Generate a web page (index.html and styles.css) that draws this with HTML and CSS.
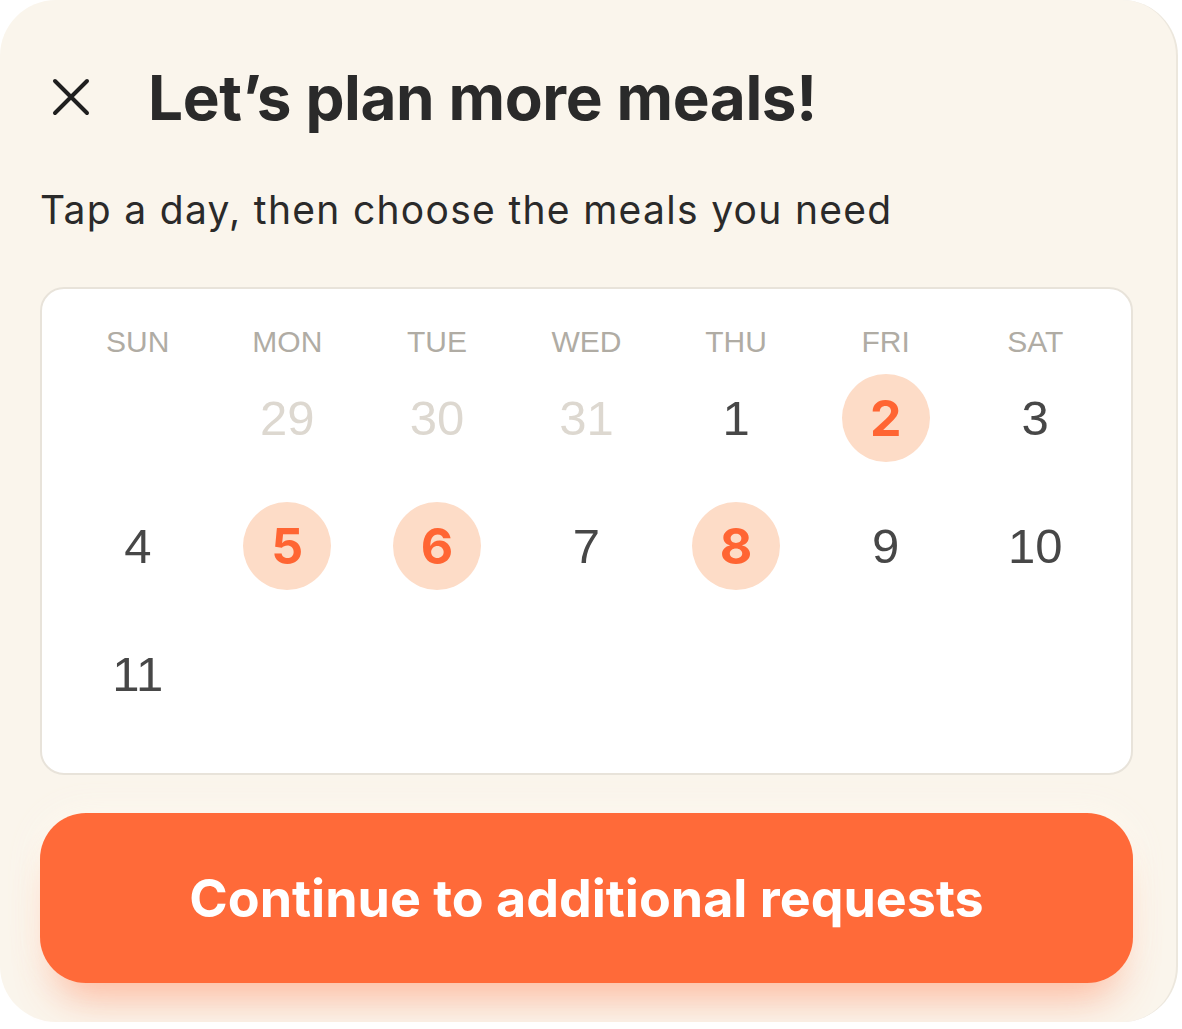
FILE: index.html
```html
<!DOCTYPE html>
<html lang="en">
<head>
    <meta charset="UTF-8">
    <meta name="viewport" content="width=device-width, initial-scale=1.0">
    <title>Plan meals</title>
    <link rel="stylesheet" href="styles.css">
</head>
<body>

<div class="sheet">
    <div class="sheet-header">
        <button class="close-btn" aria-label="Close">
            <svg width="38" height="38" viewBox="0 0 38 38">
                <path d="M3 3 L35 35 M35 3 L3 35" stroke="#1f1f1f" stroke-width="4" stroke-linecap="round" fill="none"/>
            </svg>
        </button>
        <h1>Let’s plan more meals!</h1>
    </div>

    <p class="subtitle">Tap a day, then choose the meals you need</p>

    <div class="calendar">
        <div class="week-head">
            <span>SUN</span>
            <span>MON</span>
            <span>TUE</span>
            <span>WED</span>
            <span>THU</span>
            <span>FRI</span>
            <span>SAT</span>
        </div>
        <div class="days">
            <span class="day"></span>
            <span class="day muted">29</span>
            <span class="day muted">30</span>
            <span class="day muted">31</span>
            <span class="day">1</span>
            <span class="day picked">2</span>
            <span class="day">3</span>

            <span class="day">4</span>
            <span class="day picked">5</span>
            <span class="day picked">6</span>
            <span class="day">7</span>
            <span class="day picked">8</span>
            <span class="day">9</span>
            <span class="day">10</span>

            <span class="day">11</span>
        </div>
    </div>

    <button class="continue-btn">Continue to additional requests</button>
</div>

</body>
</html>
```

FILE: styles.css
```css
body {
    margin: 0;
    padding: 0;
    background: #ffffff;
    font-family: Inter, "Liberation Sans", sans-serif;
}
.sheet {
    width: 1178px;
    height: 1022px;
    box-sizing: border-box;
    background: #faf5ec;
    border-radius: 56px;
    border-right: 2px solid #ece7dd;
    padding: 67px 43px 0 40px;
}
.sheet-header {
    display: flex;
    align-items: center;
    height: 60px;
}
.close-btn {
    background: transparent;
    border: none;
    padding: 0;
    margin-left: 12px;
    width: 38px;
    height: 38px;
    cursor: pointer;
}
.close-btn svg {
    display: block;
}
.sheet-header h1 {
    margin: 0 0 0 58px;
    font-size: 62px;
    font-weight: 700;
    letter-spacing: -0.4px;
    color: #2a2a2a;
}
.subtitle {
    margin: 60px 0 0 0;
    font-size: 39px;
    line-height: 46px;
    letter-spacing: 1.3px;
    color: #2a2a2a;
}
.calendar {
    margin-top: 54px;
    background: #ffffff;
    border: 2px solid #e8e3da;
    border-radius: 24px;
    padding: 33px 21px 55px;
    font-family: "Liberation Sans", Arial, sans-serif;
}
.week-head {
    display: grid;
    grid-template-columns: repeat(7, 1fr);
    height: 40px;
    align-items: center;
    margin-bottom: 12px;
}
.week-head span {
    text-align: center;
    font-size: 30px;
    color: #b0aca4;
}
.days {
    display: grid;
    grid-template-columns: repeat(7, 1fr);
    grid-auto-rows: 88px;
    row-gap: 40px;
}
.day {
    justify-self: center;
    width: 88px;
    height: 88px;
    border-radius: 50%;
    display: flex;
    align-items: center;
    justify-content: center;
    font-size: 49px;
    color: #474747;
}
.day.muted {
    color: #ddd8d0;
}
.day.picked {
    background: #fddcc7;
    color: #ff6533;
    font-family: Inter, "Liberation Sans", sans-serif;
    font-weight: 700;
    font-size: 50px;
}
.continue-btn {
    display: block;
    width: 100%;
    height: 170px;
    margin-top: 38px;
    border: none;
    border-radius: 46px;
    background: #ff6a39;
    color: #ffffff;
    font-family: Inter, "Liberation Sans", sans-serif;
    font-size: 52px;
    font-weight: 700;
    cursor: pointer;
    box-shadow: 0 30px 40px -16px rgba(255, 106, 57, 0.45), 0 0 34px rgba(255, 250, 240, 0.9);
}
```
